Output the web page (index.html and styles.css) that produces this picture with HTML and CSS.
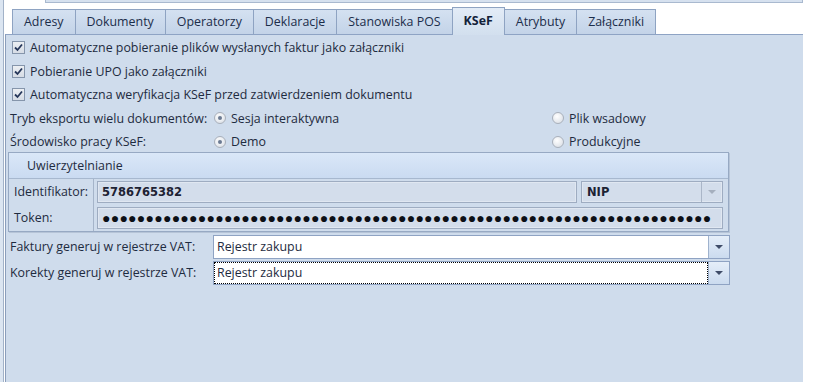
FILE: index.html
```html
<!DOCTYPE html>
<html lang="pl">
<head>
    <meta charset="UTF-8">
    <meta name="viewport" content="width=device-width, initial-scale=1.0">
    <title>KSeF</title>
    <link rel="stylesheet" href="styles.css">
</head>
<body>
    <div class="window">
        <div class="edge"></div>
        <div class="main">
            <div class="top-strip"></div>
            <ul class="tabs">
                <li class="tab">Adresy</li>
                <li class="tab">Dokumenty</li>
                <li class="tab">Operatorzy</li>
                <li class="tab">Deklaracje</li>
                <li class="tab">Stanowiska POS</li>
                <li class="tab active">KSeF</li>
                <li class="tab">Atrybuty</li>
                <li class="tab">Załączniki</li>
            </ul>
            <div class="panel">
                <label class="check-row">
                    <span class="checkbox"><svg viewBox="0 0 9 9" width="9" height="9"><path d="M1 4.5 L3.5 7 L8 1.5" fill="none" stroke="#26375a" stroke-width="1.8"/></svg></span>
                    Automatyczne pobieranie plików wysłanych faktur jako załączniki
                </label>
                <label class="check-row">
                    <span class="checkbox"><svg viewBox="0 0 9 9" width="9" height="9"><path d="M1 4.5 L3.5 7 L8 1.5" fill="none" stroke="#26375a" stroke-width="1.8"/></svg></span>
                    Pobieranie UPO jako załączniki
                </label>
                <label class="check-row">
                    <span class="checkbox"><svg viewBox="0 0 9 9" width="9" height="9"><path d="M1 4.5 L3.5 7 L8 1.5" fill="none" stroke="#26375a" stroke-width="1.8"/></svg></span>
                    Automatyczna weryfikacja KSeF przed zatwierdzeniem dokumentu
                </label>

                <div class="radio-row">
                    <span class="row-label">Tryb eksportu wielu dokumentów:</span>
                    <span class="radio-option"><span class="radio checked"></span>Sesja interaktywna</span>
                    <span class="radio-option"><span class="radio"></span>Plik wsadowy</span>
                </div>
                <div class="radio-row">
                    <span class="row-label">Środowisko pracy KSeF:</span>
                    <span class="radio-option"><span class="radio checked"></span>Demo</span>
                    <span class="radio-option"><span class="radio"></span>Produkcyjne</span>
                </div>

                <div class="group">
                    <div class="group-header">Uwierzytelnianie</div>
                    <div class="group-row">
                        <div class="group-label">Identifikator:</div>
                        <div class="group-fields">
                            <div class="input disabled value">5786765382</div>
                            <div class="combo disabled nip">
                                <span class="combo-text value">NIP</span>
                                <span class="combo-btn"><span class="arrow"></span></span>
                            </div>
                        </div>
                    </div>
                    <div class="group-row">
                        <div class="group-label">Token:</div>
                        <div class="group-fields">
                            <div class="input disabled password">●●●●●●●●●●●●●●●●●●●●●●●●●●●●●●●●●●●●●●●●●●●●●●●●●●●●●●●●●●●●●●●●●●●●●●</div>
                        </div>
                    </div>
                </div>

                <div class="form-row">
                    <span class="row-label">Faktury generuj w rejestrze VAT:</span>
                    <div class="combo wide">
                        <span class="combo-text">Rejestr zakupu</span>
                        <span class="combo-btn"><span class="arrow"></span></span>
                    </div>
                </div>
                <div class="form-row">
                    <span class="row-label">Korekty generuj w rejestrze VAT:</span>
                    <div class="combo wide">
                        <span class="combo-text focused">Rejestr zakupu</span>
                        <span class="combo-btn"><span class="arrow"></span></span>
                    </div>
                </div>
            </div>
        </div>
    </div>
</body>
</html>
```

FILE: styles.css
```css
body {
    margin: 0;
    background-color: #ffffff;
    font-family: "Open Sans", "Noto Sans", sans-serif;
    font-size: 12.4px;
    color: #1e2b40;
}
.window {
    display: flex;
    height: 382px;
}
.edge {
    width: 3px;
    background-color: #dbe5f1;
    border-right: 1px solid #a2b2c8;
}
.main {
    width: 798px;
    margin-left: 1px;
    display: flex;
    flex-direction: column;
}
.top-strip {
    height: 2px;
    margin-left: 40px;
    background-color: #d6e1ef;
    border: 1px solid #a9b9cf;
    border-top: none;
}

/* zakladki */
.tabs {
    display: flex;
    align-items: flex-end;
    height: 31px;
    margin: 0;
    padding: 0 0 0 7px;
    list-style: none;
}
.tab {
    height: 24px;
    line-height: 24px;
    padding: 0 11px;
    margin-left: -1px;
    border: 1px solid #8ea3c2;
    border-bottom: none;
    background: linear-gradient(#d4e1f1, #c3d3e8);
    color: #1b2d4a;
}
.tab:first-child {
    margin-left: 0;
}
.tab.active {
    position: relative;
    z-index: 1;
    height: 27px;
    line-height: 26px;
    margin-bottom: -1px;
    font-weight: bold;
    color: #14223a;
    background: linear-gradient(#e3ecf7, #d2dfee);
}

.panel {
    flex: 1;
    background-color: #cfdcec;
    border-top: 1px solid #8ea3c4;
    border-left: 1px solid #8b9ebb;
    padding: 1px 0 0 4px;
}

/* pola wyboru */
.check-row {
    display: flex;
    align-items: center;
    gap: 5px;
    height: 23.5px;
    padding-left: 2px;
}
.checkbox {
    width: 11px;
    height: 11px;
    display: flex;
    align-items: center;
    justify-content: center;
    border: 1px solid #8595ab;
    background: linear-gradient(#eceff3, #d6dce5);
}
.radio-row {
    display: grid;
    grid-template-columns: 204px 338px auto;
    align-items: center;
    height: 23.5px;
}
.radio-option {
    display: flex;
    align-items: center;
    gap: 5px;
}
.radio {
    width: 10px;
    height: 10px;
    border-radius: 50%;
    border: 1px solid #a9b0bb;
    background: radial-gradient(circle at 40% 35%, #ffffff, #d5dae2);
    display: flex;
    align-items: center;
    justify-content: center;
}
.radio.checked::after {
    content: "";
    width: 4px;
    height: 4px;
    border-radius: 50%;
    background-color: #6b7a92;
    box-shadow: 0 0 0 1px #eef1f5;
}

/* grupa uwierzytelniania */
.group {
    width: 721px;
    box-sizing: border-box;
    margin: -2px 0 0 -2px;
    border: 1px solid #97a9c3;
    box-shadow: 1px 1px 0 #b6c4d7;
}
.group-header {
    height: 25px;
    line-height: 25px;
    padding-left: 18px;
    border-bottom: 1px solid #a7b8cf;
    background: linear-gradient(#dae7f8, #cadbf1);
}
.group-row {
    display: flex;
    height: 26px;
}
.group-label {
    width: 79px;
    padding-left: 5px;
    line-height: 26px;
}
.group-fields {
    flex: 1;
    display: flex;
    align-items: center;
    gap: 4px;
    padding: 0 5px 0 3px;
    border-left: 1px solid #a5b4c9;
}
.input {
    flex: 1;
    height: 20px;
    line-height: 20px;
    padding-left: 4px;
    overflow: hidden;
    white-space: nowrap;
}
.value {
    font-family: "DejaVu Sans", sans-serif;
    font-size: 11.5px;
    font-weight: bold;
    color: #1d2233;
}
.password {
    font-family: "Liberation Sans", sans-serif;
    font-size: 14px;
    letter-spacing: 0.25px;
    color: #0c0f16;
}

/* listy rozwijane */
.combo {
    display: flex;
    height: 22px;
    border: 1px solid #8fa3c3;
    background-color: #ffffff;
}
.disabled,
.combo.disabled {
    background-color: #d3ddeb;
    border: 1px solid #9eacc1;
    box-shadow: inset 0 0 0 1px #e0e7f1;
}
.combo.nip {
    width: 140px;
    height: 20px;
}
.combo-text {
    flex: 1;
    padding-left: 3px;
    line-height: 22px;
}
.nip .combo-text {
    line-height: 20px;
    padding-left: 5px;
}
.combo-text.focused {
    margin: 1px;
    padding-left: 2px;
    line-height: 20px;
    outline: 1px dotted #000000;
}
.combo-btn {
    width: 20px;
    display: flex;
    align-items: center;
    justify-content: center;
    border-left: 1px solid #9fb2cd;
    background: linear-gradient(#e5eef9, #cbdbef);
}
.arrow {
    width: 0;
    height: 0;
    border-left: 4px solid transparent;
    border-right: 4px solid transparent;
    border-top: 4px solid #3f4c68;
}
.nip .combo-btn {
    background: none;
    border-left-color: #aab6c8;
}
.nip .arrow {
    border-top-color: #a5afbe;
}

.form-row {
    display: flex;
    align-items: center;
    height: 24px;
    margin-top: 2px;
}
.group + .form-row {
    margin-top: 3px;
}
.form-row .row-label {
    width: 203px;
}
.combo.wide {
    width: 515px;
}
```
